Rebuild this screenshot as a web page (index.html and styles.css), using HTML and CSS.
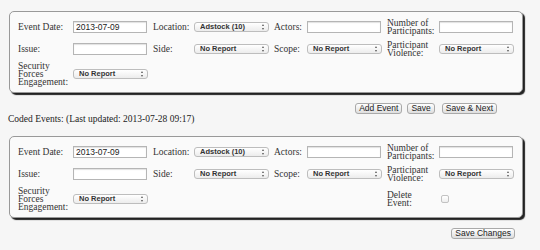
FILE: index.html
```html
<!DOCTYPE html>
<html lang="en">
<head>
    <meta charset="UTF-8">
    <title>Event Coding</title>
    <link rel="stylesheet" href="styles.css">
</head>
<body>
    <div class="event-box">
        <label>Event Date:</label>
        <input type="text" value="2013-07-09">
        <label>Location:</label>
        <span class="sel"><select><option>Adstock (10)</option></select></span>
        <label>Actors:</label>
        <input type="text">
        <label>Number of Participants:</label>
        <input type="text">

        <label>Issue:</label>
        <input type="text">
        <label>Side:</label>
        <span class="sel"><select><option>No Report</option></select></span>
        <label>Scope:</label>
        <span class="sel"><select><option>No Report</option></select></span>
        <label>Participant Violence:</label>
        <span class="sel"><select><option>No Report</option></select></span>

        <label>Security Forces Engagement:</label>
        <span class="sel"><select><option>No Report</option></select></span>
    </div>

    <div class="actions">
        <button>Add Event</button>
        <button>Save</button>
        <button class="next">Save &amp; Next</button>
    </div>

    <h4>Coded Events: (Last updated: 2013-07-28 09:17)</h4>

    <div class="event-box">
        <label>Event Date:</label>
        <input type="text" value="2013-07-09">
        <label>Location:</label>
        <span class="sel"><select><option>Adstock (10)</option></select></span>
        <label>Actors:</label>
        <input type="text">
        <label>Number of Participants:</label>
        <input type="text">

        <label>Issue:</label>
        <input type="text">
        <label>Side:</label>
        <span class="sel"><select><option>No Report</option></select></span>
        <label>Scope:</label>
        <span class="sel"><select><option>No Report</option></select></span>
        <label>Participant Violence:</label>
        <span class="sel"><select><option>No Report</option></select></span>

        <label>Security Forces Engagement:</label>
        <span class="sel"><select><option>No Report</option></select></span>
        <span></span><span></span><span></span><span></span>
        <label class="narrow">Delete Event:</label>
        <input type="checkbox" class="check">
    </div>

    <div class="actions save-changes">
        <button>Save Changes</button>
    </div>
</body>
</html>
```

FILE: styles.css
```css
* { margin: 0; padding: 0; box-sizing: border-box; }
body {
    background: #f6f6f6;
    font-family: "Liberation Serif", "DejaVu Serif", serif;
    color: #333;
    padding: 11px 0 0 9px;
}
.event-box {
    width: 514px;
    display: grid;
    grid-template-columns: 55px 80px 41px 80px 33px 80px 52px 74px;
    grid-template-rows: 16px 17px 23px;
    row-gap: 5px;
    align-items: center;
    padding: 7px 0 7px 8px;
    background: #fafafa;
    border: 1px solid #999;
    border-radius: 5px;
    box-shadow: 2px 2px 1px #222;
}
.event-box label {
    font-size: 9.5px;
    line-height: 8px;
    color: #333;
}
.event-box .narrow { width: 30px; }
.event-box input[type="text"] {
    width: 74px;
    height: 12px;
    border: 1px solid #b5b5b5;
    background: #fff;
    box-shadow: inset 0 1px 1px #e2e2e2;
    font: 8.5px "Liberation Sans", Arial, sans-serif;
    color: #222;
    padding: 0 2px;
}
.sel {
    position: relative;
    display: block;
    width: 75px;
    height: 10px;
}
.sel select {
    appearance: none;
    -webkit-appearance: none;
    display: block;
    width: 100%;
    height: 100%;
    border: 1px solid #bdbdbd;
    border-radius: 3px;
    background: linear-gradient(#ffffff, #ececec);
    font: bold 7.5px "Liberation Sans", Arial, sans-serif;
    color: #333;
    padding: 0 0 0 5px;
    line-height: 8px;
}
.sel::before, .sel::after {
    content: "";
    position: absolute;
    right: 5px;
    border-left: 1.5px solid transparent;
    border-right: 1.5px solid transparent;
}
.sel::before { top: 2px; border-bottom: 2px solid #555; }
.sel::after { bottom: 2px; border-top: 2px solid #555; }
.check {
    appearance: none;
    -webkit-appearance: none;
    width: 8px;
    height: 8px;
    margin-left: 2px;
    border: 1px solid #c2c2c2;
    border-radius: 2px;
    background: linear-gradient(#fff, #eee);
}
.actions {
    width: 488px;
    margin-top: 10px;
    display: flex;
    justify-content: flex-end;
    gap: 5px;
}
.actions button {
    height: 11px;
    padding: 0 3px;
    font: 8.5px "Liberation Sans", Arial, sans-serif;
    line-height: 9px;
    color: #222;
    border: 1px solid #a9a9a9;
    border-radius: 3px;
    background: linear-gradient(#ffffff, #dedede);
}
.actions .next { margin-left: 2px; }
h4 {
    font-weight: normal;
    font-size: 9.5px;
    line-height: 10px;
    color: #222;
    margin: 0 0 12px -1px;
}
.save-changes {
    width: 506px;
    margin-top: 10px;
}
```
